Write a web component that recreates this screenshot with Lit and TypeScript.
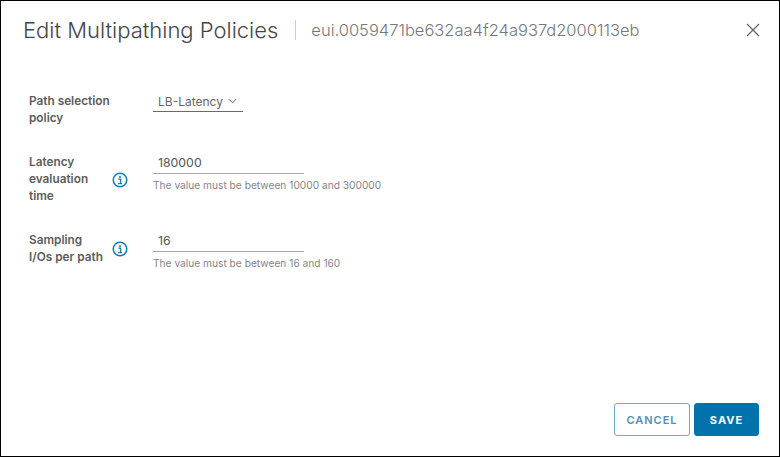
import { LitElement, html, css } from "lit";
import { customElement } from "lit/decorators.js";

const info = html`<svg class="info" viewBox="0 0 16 16" width="16" height="16" aria-hidden="true">
  <circle cx="8" cy="8" r="6.8" fill="none" stroke="#0f7fb3" stroke-width="1.5"></circle>
  <circle cx="8" cy="4.9" r="1" fill="#0f7fb3"></circle>
  <path d="M6.3 7.2H8.6V11.2M6.1 11.6H10" fill="none" stroke="#0f7fb3" stroke-width="1.3"></path>
</svg>`;

@customElement("app-root")
export class AppRoot extends LitElement {
  static styles = css`
    :host {
      display: block;
      width: 780px;
      height: 457px;
      box-sizing: border-box;
      border: 1px solid #000;
      background: #fff;
      font-family: Inter, "Liberation Sans", sans-serif;
      color: #565656;
      overflow: hidden;
    }
    .dialog {
      height: 100%;
      display: flex;
      flex-direction: column;
      padding: 0 20px 20px 22px;
      box-sizing: border-box;
    }
    .head {
      display: flex;
      align-items: center;
      height: 57px;
      flex: none;
    }
    .title {
      font-size: 22px;
      font-weight: 300;
      color: #454545;
      white-space: nowrap;
    }
    .sep {
      width: 1px;
      height: 20px;
      background: #d0d0d0;
      margin: 0 15px 0 17px;
    }
    .sub {
      font-size: 16.5px;
      font-weight: 300;
      color: #777;
      white-space: nowrap;
    }
    .close {
      margin-left: auto;
      margin-right: -1px;
      display: flex;
      color: #666;
    }
    .form {
      flex: 1;
      display: flex;
      flex-direction: column;
      padding: 35px 0 0 6px;
      gap: 27px;
    }
    .row {
      display: grid;
      grid-template-columns: 124px 1fr;
    }
    .label {
      display: flex;
      align-items: center;
      justify-content: space-between;
      align-self: start;
      font-size: 11.8px;
      font-weight: 600;
      line-height: 17px;
      color: #5c5c5c;
      padding-right: 25px;
    }
    .label span {
      display: block;
    }
    .select {
      width: 90px;
      height: 19px;
      border-bottom: 1px solid #6a6a6a;
      display: flex;
      align-items: flex-start;
      gap: 5px;
      padding-left: 5px;
      box-sizing: border-box;
      font-size: 12px;
      line-height: 17px;
      color: #666;
    }
    .select svg {
      margin-top: 5px;
    }
    .input {
      width: 151px;
      height: 20px;
      box-sizing: border-box;
      border-bottom: 1px solid #a8a8a8;
      padding-left: 5px;
      font-size: 12.3px;
      line-height: 17px;
      color: #555;
    }
    .hint {
      font-size: 10.2px;
      color: #868686;
      margin-top: 5px;
      line-height: 12px;
      white-space: nowrap;
    }
    .foot {
      display: flex;
      justify-content: flex-end;
      gap: 4px;
    }
    .btn {
      width: 76px;
      height: 33px;
      box-sizing: border-box;
      border-radius: 3px;
      border: 1.5px solid #6aaccd;
      background: #fff;
      color: #5590b3;
      font-size: 11px;
      font-weight: 600;
      letter-spacing: 1px;
      display: flex;
      align-items: center;
      justify-content: center;
    }
    .btn.primary {
      width: 65px;
      background: #0272ad;
      border-color: #0272ad;
      color: #fff;
      font-weight: 700;
    }
  `;

  render() {
    return html`<div class="dialog">
      <div class="head">
        <div class="title">Edit Multipathing Policies</div>
        <div class="sep"></div>
        <div class="sub">eui.0059471be632aa4f24a937d2000113eb</div>
        <div class="close">
          <svg viewBox="0 0 14 14" width="14" height="14" aria-hidden="true">
            <path d="M1 1L13 13M13 1L1 13" stroke="currentColor" stroke-width="1.3" fill="none"></path>
          </svg>
        </div>
      </div>
      <div class="form">
        <div class="row">
          <div class="label"><span>Path selection<br />policy</span></div>
          <div class="select">LB-Latency
            <svg viewBox="0 0 10 6" width="9" height="6" aria-hidden="true"><path d="M1 1L5 5L9 1" stroke="#666" stroke-width="1.1" fill="none"></path></svg>
          </div>
        </div>
        <div class="row">
          <div class="label"><span>Latency<br />evaluation<br />time</span>${info}</div>
          <div>
            <div class="input">180000</div>
            <div class="hint">The value must be between 10000 and 300000</div>
          </div>
        </div>
        <div class="row">
          <div class="label"><span>Sampling<br />I/Os per path</span>${info}</div>
          <div>
            <div class="input">16</div>
            <div class="hint">The value must be between 16 and 160</div>
          </div>
        </div>
      </div>
      <div class="foot">
        <div class="btn">CANCEL</div>
        <div class="btn primary">SAVE</div>
      </div>
    </div>`;
  }
}
